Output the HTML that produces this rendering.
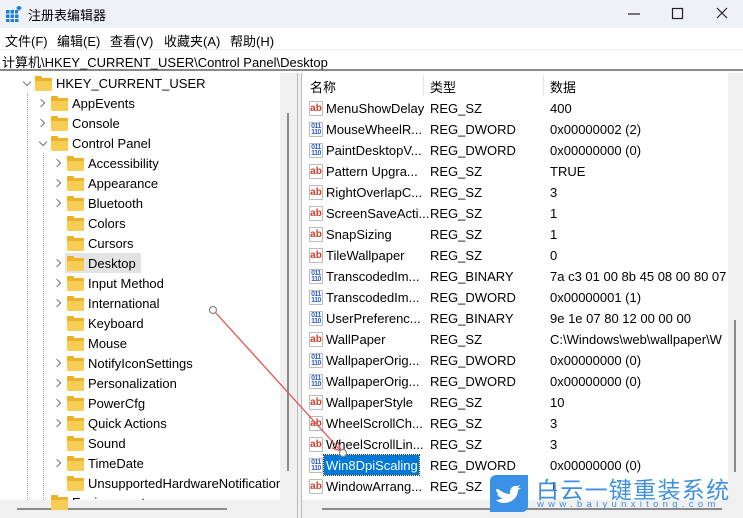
<!DOCTYPE html>
<html><head><meta charset="utf-8"><style>
*{margin:0;padding:0;box-sizing:border-box}
body{width:743px;height:518px;overflow:hidden;position:relative;background:#fff;font-family:"Liberation Sans","Noto Sans CJK SC",sans-serif;font-size:13px;color:#000}
.a{position:absolute;white-space:nowrap}
.title{left:0;top:0;width:743px;height:28px;background:#eef2f7}
.menu{top:28px;height:20px;left:0;width:743px;background:#fff}
.addr{top:49px;height:22px;left:0;width:743px;background:#fff;border-top:1px solid #ececec;border-bottom:2px solid #8a8a8a}
.t{height:20px;line-height:21px}
.f{position:absolute;width:17px;height:13px;background:#f8cd55;border-top:3px solid #eeb22a;border-radius:1px}
.f:before{content:"";position:absolute;left:0;top:-5px;width:7px;height:3px;background:#eeb22a;border-radius:1px 1px 0 0}
.c{position:absolute;width:6px;height:6px;border-right:1.3px solid #777;border-bottom:1.3px solid #777;transform:rotate(-45deg)}
.cd{transform:rotate(45deg)}
.r{height:21px;line-height:21px}
.ic{position:absolute;width:14px;height:15px;border:1px solid #bbb;border-radius:1px;background:#fff;font:bold 10px "Liberation Sans",sans-serif;line-height:13px;text-align:center}
.sz{color:#d0402a}
.dw{color:#2a5fc8;font-size:7px;line-height:6px;letter-spacing:-0.5px;padding-top:1px}
</style></head><body>
<div class="a title"></div>
<svg class="a" style="left:6px;top:6px" width="16" height="16" viewBox="0 0 16 16"><g fill="#1e7fd6"><rect x="0" y="4" width="3.5" height="3.5"/><rect x="4.5" y="4" width="3.5" height="3.5"/><rect x="9" y="4" width="3" height="3.5"/><rect x="0" y="8.5" width="3.5" height="3.5"/><rect x="4.5" y="8.5" width="3.5" height="3.5"/><rect x="9" y="8.5" width="3.5" height="3.5"/><rect x="0" y="13" width="3.5" height="3"/><rect x="4.5" y="13" width="3.5" height="3"/><rect x="9" y="13" width="3.5" height="3"/><rect x="11" y="0" width="4" height="4" transform="rotate(45 13 2)"/></g></svg>
<div class="a" style="left:28px;top:5px;font-size:13px">注册表编辑器</div>
<svg class="a" style="left:620px;top:6px" width="120" height="16"><path d="M8 8h12" stroke="#222" stroke-width="1.2"/><rect x="52.5" y="2.5" width="10" height="10" fill="none" stroke="#222" stroke-width="1.2"/><path d="M97 2l10 10M107 2l-10 10" stroke="#222" stroke-width="1.2"/></svg>
<div class="a menu"></div>
<div class="a" style="left:5px;top:31px">文件(F)</div>
<div class="a" style="left:57px;top:31px">编辑(E)</div>
<div class="a" style="left:110px;top:31px">查看(V)</div>
<div class="a" style="left:164px;top:31px">收藏夹(A)</div>
<div class="a" style="left:230px;top:31px">帮助(H)</div>
<div class="a addr"></div>
<div class="a" style="left:2px;top:52px">计算机\HKEY_CURRENT_USER\Control Panel\Desktop</div>

<div class="a" style="left:280px;top:73px;width:18px;height:428px;background:#f0f0f0"></div>
<div class="a" style="left:287px;top:113px;width:2px;height:358px;background:#8a8a8a"></div>
<div class="a" style="left:0;top:500px;width:298px;height:18px;background:#f0f0f0"></div>
<div class="a" style="left:17px;top:508px;width:210px;height:2px;background:#8a8a8a"></div>
<div class="a" style="left:297px;top:73px;width:1px;height:445px;background:#bbb"></div>
<div class="a" style="left:301px;top:73px;width:1px;height:445px;background:#bbb"></div>
<div class="a" style="left:298px;top:73px;width:3px;height:445px;background:#f0f0f0"></div>
<div class="a" style="left:27px;top:93px;height:407px;border-left:1px dotted #999"></div>
<div class="a" style="left:43px;top:153px;height:347px;border-left:1px dotted #999"></div>

<div class="c cd" style="left:24px;top:79px"></div><div class="f" style="left:35px;top:78px"></div><div class="a t" style="left:56px;top:73px">HKEY_CURRENT_USER</div>
<div class="c" style="left:38px;top:100px"></div><div class="f" style="left:51px;top:98px"></div><div class="a t" style="left:72px;top:93px">AppEvents</div>
<div class="c" style="left:38px;top:120px"></div><div class="f" style="left:51px;top:118px"></div><div class="a t" style="left:72px;top:113px">Console</div>
<div class="c cd" style="left:40px;top:139px"></div><div class="f" style="left:51px;top:138px"></div><div class="a t" style="left:72px;top:133px">Control Panel</div>

<div class="a" style="left:65px;top:253px;width:76px;height:20px;background:#e3e3e3"></div>
<div class="c" style="left:54px;top:160px"></div><div class="f" style="left:67px;top:158px"></div><div class="a t" style="left:88px;top:153px">Accessibility</div>
<div class="c" style="left:54px;top:180px"></div><div class="f" style="left:67px;top:178px"></div><div class="a t" style="left:88px;top:173px">Appearance</div>
<div class="c" style="left:54px;top:200px"></div><div class="f" style="left:67px;top:198px"></div><div class="a t" style="left:88px;top:193px">Bluetooth</div>
<div class="f" style="left:67px;top:218px"></div><div class="a t" style="left:88px;top:213px">Colors</div>
<div class="f" style="left:67px;top:238px"></div><div class="a t" style="left:88px;top:233px">Cursors</div>
<div class="c" style="left:54px;top:260px"></div><div class="f" style="left:67px;top:258px"></div><div class="a t" style="left:88px;top:253px">Desktop</div>
<div class="c" style="left:54px;top:280px"></div><div class="f" style="left:67px;top:278px"></div><div class="a t" style="left:88px;top:273px">Input Method</div>
<div class="c" style="left:54px;top:300px"></div><div class="f" style="left:67px;top:298px"></div><div class="a t" style="left:88px;top:293px">International</div>
<div class="f" style="left:67px;top:318px"></div><div class="a t" style="left:88px;top:313px">Keyboard</div>
<div class="f" style="left:67px;top:338px"></div><div class="a t" style="left:88px;top:333px">Mouse</div>
<div class="c" style="left:54px;top:360px"></div><div class="f" style="left:67px;top:358px"></div><div class="a t" style="left:88px;top:353px">NotifyIconSettings</div>
<div class="c" style="left:54px;top:380px"></div><div class="f" style="left:67px;top:378px"></div><div class="a t" style="left:88px;top:373px">Personalization</div>
<div class="c" style="left:54px;top:400px"></div><div class="f" style="left:67px;top:398px"></div><div class="a t" style="left:88px;top:393px">PowerCfg</div>
<div class="c" style="left:54px;top:420px"></div><div class="f" style="left:67px;top:418px"></div><div class="a t" style="left:88px;top:413px">Quick Actions</div>
<div class="f" style="left:67px;top:438px"></div><div class="a t" style="left:88px;top:433px">Sound</div>
<div class="c" style="left:54px;top:460px"></div><div class="f" style="left:67px;top:458px"></div><div class="a t" style="left:88px;top:453px">TimeDate</div>
<div class="f" style="left:67px;top:478px"></div><div class="a t" style="left:88px;top:473px;width:192px;overflow:hidden">UnsupportedHardwareNotificationCache</div>
<div class="f" style="left:51px;top:497px"></div><div class="a t" style="left:72px;top:492px;height:8px;overflow:hidden">Environment</div>

<div class="a" style="left:728px;top:73px;width:15px;height:428px;background:#f0f0f0"></div>
<div class="a" style="left:734px;top:320px;width:2px;height:152px;background:#8a8a8a"></div>
<div class="a" style="left:302px;top:500px;width:441px;height:18px;background:#f0f0f0"></div>
<div class="a" style="left:322px;top:508px;width:400px;height:2px;background:#8a8a8a"></div>
<div class="a" style="left:423px;top:75px;width:1px;height:21px;background:#e5e5e5"></div>
<div class="a" style="left:543px;top:75px;width:1px;height:21px;background:#e5e5e5"></div>
<div class="a" style="left:310px;top:77px">名称</div>
<div class="a" style="left:430px;top:77px">类型</div>
<div class="a" style="left:550px;top:77px">数据</div>

<div class="a" style="left:324px;top:455px;width:95px;height:20px;background:#0078d7;outline:1px dotted #333"></div>

<div style="position:absolute;left:0;top:98px">
<div class="ic sz" style="left:309px;top:3px">ab</div><div class="a r" style="left:326px;top:0">MenuShowDelay</div><div class="a r" style="left:430px;top:0">REG_SZ</div><div class="a r" style="left:550px;top:0">400</div>
<div class="ic dw" style="left:309px;top:24px">011<br>110</div><div class="a r" style="left:326px;top:21px">MouseWheelR...</div><div class="a r" style="left:430px;top:21px">REG_DWORD</div><div class="a r" style="left:550px;top:21px">0x00000002 (2)</div>
<div class="ic dw" style="left:309px;top:45px">011<br>110</div><div class="a r" style="left:326px;top:42px">PaintDesktopV...</div><div class="a r" style="left:430px;top:42px">REG_DWORD</div><div class="a r" style="left:550px;top:42px">0x00000000 (0)</div>
<div class="ic sz" style="left:309px;top:66px">ab</div><div class="a r" style="left:326px;top:63px">Pattern Upgra...</div><div class="a r" style="left:430px;top:63px">REG_SZ</div><div class="a r" style="left:550px;top:63px">TRUE</div>
<div class="ic sz" style="left:309px;top:87px">ab</div><div class="a r" style="left:326px;top:84px">RightOverlapC...</div><div class="a r" style="left:430px;top:84px">REG_SZ</div><div class="a r" style="left:550px;top:84px">3</div>
<div class="ic sz" style="left:309px;top:108px">ab</div><div class="a r" style="left:326px;top:105px">ScreenSaveActi...</div><div class="a r" style="left:430px;top:105px">REG_SZ</div><div class="a r" style="left:550px;top:105px">1</div>
<div class="ic sz" style="left:309px;top:129px">ab</div><div class="a r" style="left:326px;top:126px">SnapSizing</div><div class="a r" style="left:430px;top:126px">REG_SZ</div><div class="a r" style="left:550px;top:126px">1</div>
<div class="ic sz" style="left:309px;top:150px">ab</div><div class="a r" style="left:326px;top:147px">TileWallpaper</div><div class="a r" style="left:430px;top:147px">REG_SZ</div><div class="a r" style="left:550px;top:147px">0</div>
<div class="ic dw" style="left:309px;top:171px">011<br>110</div><div class="a r" style="left:326px;top:168px">TranscodedIm...</div><div class="a r" style="left:430px;top:168px">REG_BINARY</div><div class="a r" style="left:550px;top:168px;width:178px;overflow:hidden">7a c3 01 00 8b 45 08 00 80 07</div>
<div class="ic dw" style="left:309px;top:192px">011<br>110</div><div class="a r" style="left:326px;top:189px">TranscodedIm...</div><div class="a r" style="left:430px;top:189px">REG_DWORD</div><div class="a r" style="left:550px;top:189px">0x00000001 (1)</div>
<div class="ic dw" style="left:309px;top:213px">011<br>110</div><div class="a r" style="left:326px;top:210px">UserPreferenc...</div><div class="a r" style="left:430px;top:210px">REG_BINARY</div><div class="a r" style="left:550px;top:210px">9e 1e 07 80 12 00 00 00</div>
<div class="ic sz" style="left:309px;top:234px">ab</div><div class="a r" style="left:326px;top:231px">WallPaper</div><div class="a r" style="left:430px;top:231px">REG_SZ</div><div class="a r" style="left:550px;top:231px;width:178px;overflow:hidden">C:\Windows\web\wallpaper\W</div>
<div class="ic dw" style="left:309px;top:255px">011<br>110</div><div class="a r" style="left:326px;top:252px">WallpaperOrig...</div><div class="a r" style="left:430px;top:252px">REG_DWORD</div><div class="a r" style="left:550px;top:252px">0x00000000 (0)</div>
<div class="ic dw" style="left:309px;top:276px">011<br>110</div><div class="a r" style="left:326px;top:273px">WallpaperOrig...</div><div class="a r" style="left:430px;top:273px">REG_DWORD</div><div class="a r" style="left:550px;top:273px">0x00000000 (0)</div>
<div class="ic sz" style="left:309px;top:297px">ab</div><div class="a r" style="left:326px;top:294px">WallpaperStyle</div><div class="a r" style="left:430px;top:294px">REG_SZ</div><div class="a r" style="left:550px;top:294px">10</div>
<div class="ic sz" style="left:309px;top:318px">ab</div><div class="a r" style="left:326px;top:315px">WheelScrollCh...</div><div class="a r" style="left:430px;top:315px">REG_SZ</div><div class="a r" style="left:550px;top:315px">3</div>
<div class="ic sz" style="left:309px;top:339px">ab</div><div class="a r" style="left:326px;top:336px">WheelScrollLin...</div><div class="a r" style="left:430px;top:336px">REG_SZ</div><div class="a r" style="left:550px;top:336px">3</div>
<div class="ic dw" style="left:309px;top:360px">011<br>110</div><div class="a r" style="left:326px;top:357px;color:#fff">Win8DpiScaling</div><div class="a r" style="left:430px;top:357px">REG_DWORD</div><div class="a r" style="left:550px;top:357px">0x00000000 (0)</div>
<div class="ic sz" style="left:309px;top:381px">ab</div><div class="a r" style="left:326px;top:378px">WindowArrang...</div><div class="a r" style="left:430px;top:378px">REG_SZ</div><div class="a r" style="left:550px;top:378px">1</div>
</div>

<svg class="a" style="left:0;top:0" width="743" height="518"><line x1="215" y1="312" x2="341" y2="451" stroke="#e05555" stroke-width="1.3"/><path d="M341 451l-9-3M341 451l-3-9" stroke="#e05555" stroke-width="1.3"/><circle cx="213" cy="310" r="3.5" fill="#fff" stroke="#888" stroke-width="1.2"/><circle cx="343" cy="453" r="3.5" fill="#fff" stroke="#888" stroke-width="1.2"/></svg>

<svg class="a" style="left:490px;top:475px" width="38" height="37" viewBox="0 0 38 37"><path d="M6 0h32v31a6 6 0 0 1-6 6H0V6a6 6 0 0 1 6-6z" fill="#3a91e6"/><path d="M8 14c4 3 8 5 12 5-1-5 3-9 7-8l3-1-2 3 3 0-3 2c0 7-6 13-14 13-3 0-6-1-8-3 3 0 5-1 7-2-3 0-5-2-6-4h2c-2-1-3-3-3-5l2 1c-1-1-1-1 0-1z" fill="#fff"/></svg>
<div class="a" style="left:536px;top:473px;font-size:23px;color:#3f8fe0;letter-spacing:1.3px;font-family:'Noto Sans CJK SC',sans-serif;line-height:30px">白云一键重装系统</div>
<div class="a" style="left:537px;top:499px;font-size:9.5px;color:#3f8fe0;letter-spacing:4.3px">www.baiyunxitong.com</div>
</body></html>
